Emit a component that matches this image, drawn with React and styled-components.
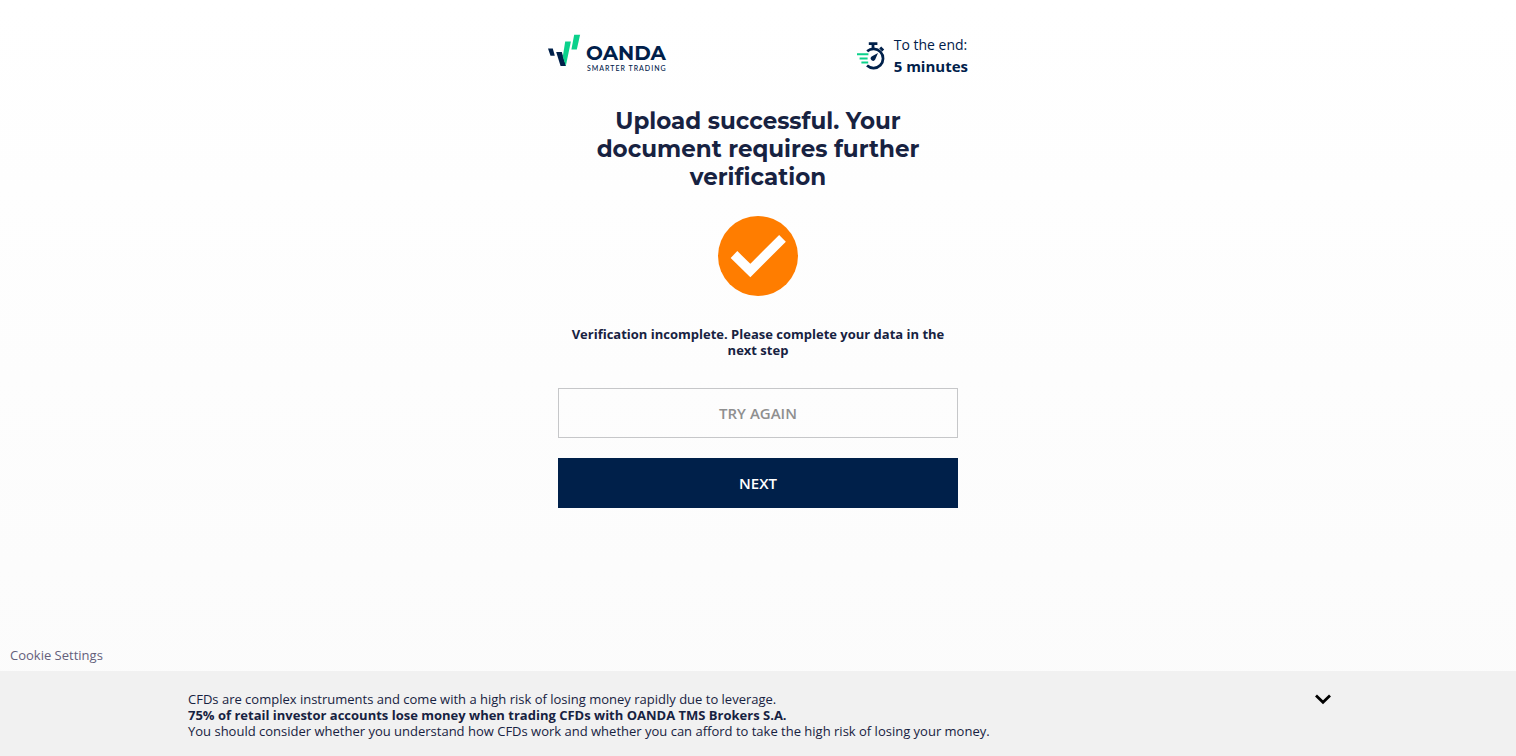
import React from 'react';
import styled, { createGlobalStyle } from 'styled-components';

const GlobalStyle = createGlobalStyle`
    * {
        box-sizing: border-box;
    }
    body {
        margin: 0;
        background: #fcfcfc;
        color: #172241;
        font-family: 'Open Sans', 'Noto Sans', sans-serif;
        font-size: 13px;
        line-height: 16px;
    }
    h1, p {
        margin: 0;
    }
`;

const Page = styled.div`
    min-height: 100vh;
    display: flex;
    flex-direction: column;
    background: linear-gradient(#ffffff, #fbfbfb);
`;

const Column = styled.div`
    width: 100%;
    max-width: 420px;
    margin: 0 auto;
    padding-top: 34px;
    flex: 1;
`;

const Header = styled.header`
    display: flex;
    justify-content: space-between;
    align-items: flex-start;
`;

const LogoLink = styled.a`
    display: block;
    svg {
        display: block;
    }
`;

const LogoName = styled.text`
    font-family: Montserrat, Lato, sans-serif;
    font-size: 20px;
    font-weight: 700;
    fill: #00204a;
`;

const LogoTagline = styled.text`
    font-family: Lato, sans-serif;
    font-size: 7px;
    font-weight: 500;
    letter-spacing: 1px;
    fill: #00204a;
`;

const Timer = styled.div`
    display: flex;
    align-items: center;
    gap: 8px;
    color: #00204a;
    font-size: 14px;
    line-height: 22px;
    strong {
        display: block;
        font-size: 15px;
        line-height: 20px;
    }
`;

const Content = styled.main`
    display: flex;
    flex-direction: column;
    align-items: center;
    padding: 31px 10px 30px;
    text-align: center;
`;

const Title = styled.h1`
    max-width: 360px;
    margin-bottom: 25px;
    font-family: Montserrat, Inter, sans-serif;
    font-size: 23px;
    font-weight: 700;
    font-variant-ligatures: none;
    line-height: 28px;
`;

const Message = styled.p`
    margin: 30px 0;
    padding: 0 10px;
    font-weight: 700;
`;

const Actions = styled.div`
    width: 100%;
    display: flex;
    flex-direction: column;
    gap: 20px;
`;

const Button = styled.button`
    width: 100%;
    height: 50px;
    border: 1px solid ${({ $primary }) => ($primary ? '#00204a' : '#c6c7c9')};
    background: ${({ $primary }) => ($primary ? '#00204a' : 'transparent')};
    color: ${({ $primary }) => ($primary ? '#ffffff' : '#8f8f8f')};
    font-family: inherit;
    font-size: 15px;
    font-weight: 600;
    text-transform: uppercase;
    cursor: pointer;
`;

const CookieLink = styled.a`
    align-self: flex-start;
    margin: 0 10px 8px;
    color: #64607b;
    text-decoration: none;
`;

const RiskBar = styled.footer`
    padding: 20px 16px 17px;
    background: #f1f1f1;
`;

const RiskInner = styled.div`
    max-width: 1140px;
    margin: 0 auto;
    display: flex;
    justify-content: space-between;
    align-items: flex-start;
`;

const RiskText = styled.p`
    strong {
        display: block;
    }
`;

const Toggle = styled.button`
    margin-right: -4px;
    padding: 0;
    border: 0;
    background: none;
    color: #000000;
    cursor: pointer;
    svg {
        display: block;
    }
`;

const Logo = () => (
    <svg width="124" height="40" viewBox="0 0 124 40">
        <path d="M0 14.5h4.8l2 7.2H2.5z" fill="#00204a" />
        <path d="M8.2 18h5.6l4.2 14h-5.4z" fill="#00204a" />
        <path d="M17.2 7.6h5.7L17.8 32l-3-9.6z" fill="#0bd18b" />
        <path d="M26.2 0.8h5.9l-3.3 14.6h-5.4z" fill="#0bd18b" />
        <LogoName x="38" y="26">OANDA</LogoName>
        <LogoTagline x="39" y="37">SMARTER TRADING</LogoTagline>
    </svg>
);

const StopwatchIcon = () => (
    <svg width="30" height="32" viewBox="0 0 30 32" fill="none">
        <path d="M11.2 12.2a9.6 9.6 0 1 1 -0.2 14.4" stroke="#00204a" strokeWidth="2.7" />
        <path d="M12.8 4.6h8.6M17 5v4.6M24.2 8.6l3 3" stroke="#00204a" strokeWidth="2.8" />
        <path d="M22 14l-2.8 6.6a2.4 2.4 0 1 1-3.6-3.1z" fill="#00204a" />
        <path d="M1 15.2h11.4M3.6 19.4h8M5.4 23.6h6.8" stroke="#0bd18b" strokeWidth="2" />
    </svg>
);

const CheckIcon = () => (
    <svg width="80" height="80" viewBox="0 0 80 80">
        <circle cx="40" cy="40" r="40" fill="#ff7d00" />
        <path d="M16 38.5L32.3 54.5L64.5 22.3" fill="none" stroke="#ffffff" strokeWidth="9.5" />
    </svg>
);

const ChevronIcon = () => (
    <svg width="18" height="16" viewBox="0 0 18 16" fill="none">
        <path d="M2 4.5L9 11.2l7-6.7" stroke="currentColor" strokeWidth="2.8" />
    </svg>
);

const App = () => {
    return (
        <>
            <GlobalStyle />
            <Page>
                <Column>
                    <Header>
                        <LogoLink href="/" aria-label="OANDA">
                            <Logo />
                        </LogoLink>
                        <Timer>
                            <StopwatchIcon />
                            <div>
                                To the end:
                                <strong>5 minutes</strong>
                            </div>
                        </Timer>
                    </Header>
                    <Content>
                        <Title>Upload successful. Your document requires further verification</Title>
                        <CheckIcon />
                        <Message>Verification incomplete. Please complete your data in the next step</Message>
                        <Actions>
                            <Button type="button">Try again</Button>
                            <Button type="button" $primary>Next</Button>
                        </Actions>
                    </Content>
                </Column>
                <CookieLink href="#cookies">Cookie Settings</CookieLink>
                <RiskBar>
                    <RiskInner>
                        <RiskText>
                            CFDs are complex instruments and come with a high risk of losing money rapidly due to leverage.
                            <strong>75% of retail investor accounts lose money when trading CFDs with OANDA TMS Brokers S.A.</strong>
                            You should consider whether you understand how CFDs work and whether you can afford to take the high risk of losing your money.
                        </RiskText>
                        <Toggle type="button" aria-label="Collapse">
                            <ChevronIcon />
                        </Toggle>
                    </RiskInner>
                </RiskBar>
            </Page>
        </>
    );
};

export default App;
